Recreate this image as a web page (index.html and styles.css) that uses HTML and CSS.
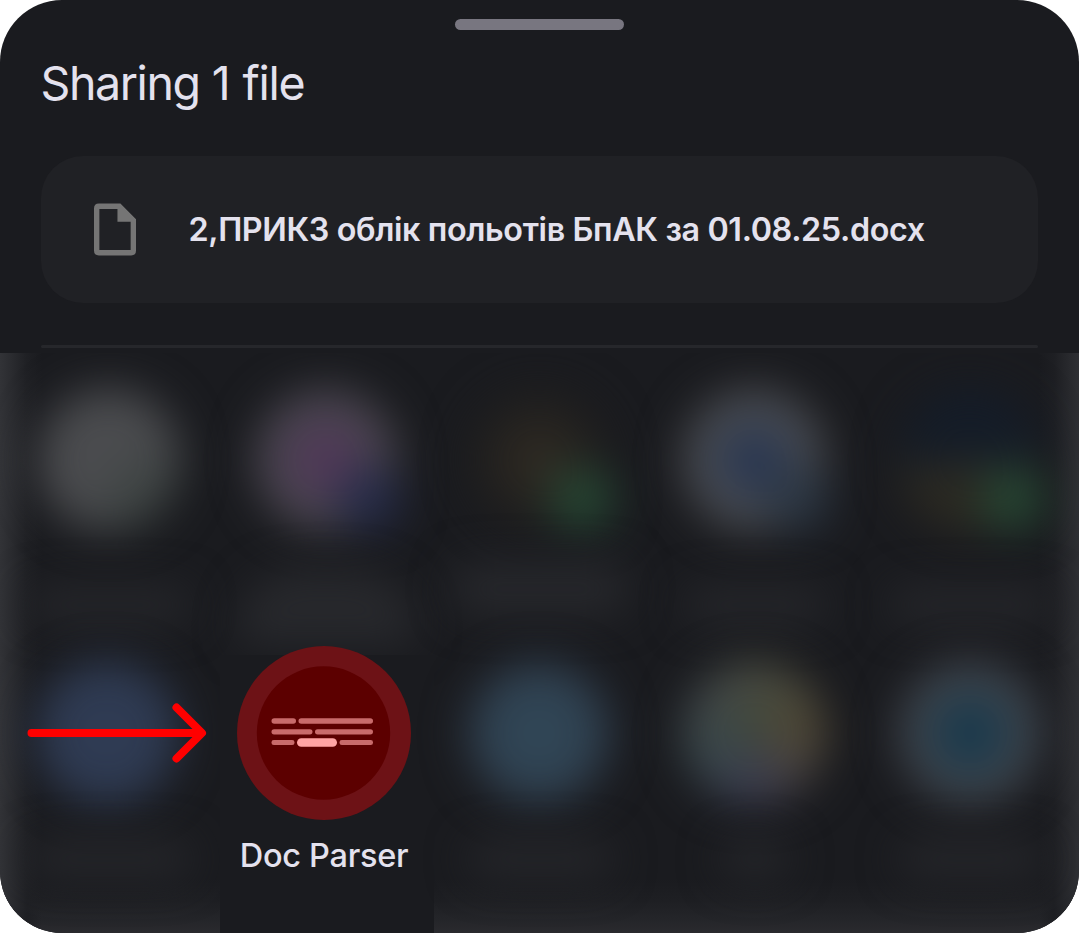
FILE: index.html
```html
<!DOCTYPE html>
<html lang="uk">
<head>
<meta charset="utf-8">
<title>Sharing 1 file</title>
<link rel="stylesheet" href="styles.css">
</head>
<body>
<main class="sheet">
  <div class="handle"></div>
  <h1 class="title"><span class="t-word">Sharing</span><span class="t-num">1</span><span class="t-file">file</span></h1>
  <section class="file-card">
    <svg class="file-icon" width="43" height="54" viewBox="0 0 44 54">
      <path fill="#757575" fill-rule="evenodd" d="M5 0H27L43 16V48Q43 53 38 53H5Q0 53 0 48V5Q0 0 5 0ZM5.500 5.500V47.500H37.500V18.500H24V5.500Z"/>
    </svg>
    <span class="file-name">2,ПРИКЗ облік польотів БпАК за 01.08.25.docx</span>
  </section>
  <div class="divider"></div>
  <section class="targets">
    <div class="app"><div class="icon gray"></div><div class="label w150"></div></div>
    <div class="app"><div class="icon violet"><i class="badge indigo"></i></div><div class="label tall"></div></div>
    <div class="app"><div class="icon dim"><i class="badge green"></i></div><div class="label high"></div></div>
    <div class="app"><div class="icon navy"><i class="badge slate"></i></div><div class="label w130"></div></div>
    <div class="app"><div class="icon split"><i class="badge green"></i></div><div class="label w150"></div></div>
    <div class="app"><div class="icon blue"></div><div class="label w150"></div></div>
    <div class="app selected">
      <svg class="doc-icon" width="174" height="174" viewBox="0 0 174 174">
        <circle cx="87" cy="87" r="87" fill="#6d1216"/>
        <circle cx="86.500" cy="87" r="66.700" fill="#5c0000"/>
        <g fill="#c96b6b">
          <rect x="34.500" y="72.200" width="24.500" height="5.600" rx="2.800"/>
          <rect x="61.500" y="72.200" width="74.500" height="5.600" rx="2.800"/>
          <rect x="34.500" y="83.200" width="41" height="5.200" rx="2.600"/>
          <rect x="78" y="83.200" width="58" height="5.200" rx="2.600"/>
          <rect x="34.500" y="94" width="23" height="5" rx="2.300"/>
          <rect x="102.500" y="94" width="33.500" height="5" rx="2.300"/>
        </g>
        <rect x="60" y="92.200" width="40" height="8.600" rx="4.300" fill="#ffa4a4"/>
      </svg>
      <span class="app-name">Doc Parser</span>
    </div>
    <div class="app"><div class="icon teal"></div><div class="label w130"></div></div>
    <div class="app"><div class="icon multi"></div><div class="label w60"></div></div>
    <div class="app"><div class="icon cyan"></div><div class="label w130"></div></div>
  </section>
  <svg class="arrow" width="180" height="62" viewBox="0 0 180 62">
    <path d="M4.500 31H174.500M149.500 5.500L175 31L149.500 56.500" fill="none" stroke="#ff0000" stroke-width="8" stroke-linecap="round" stroke-linejoin="round"/>
  </svg>
</main>
</body>
</html>
```
FILE: styles.css
```css
* { box-sizing: border-box; }
body { margin: 0; background: #fff; font-family: Inter, "Open Sans", sans-serif; }

.sheet {
  position: relative;
  display: flex;
  flex-direction: column;
  width: 1079px;
  height: 933px;
  overflow: hidden;
  border-radius: 62px;
  background: #1a1b1f;
  color: #e4e2ee;
}
.handle {
  flex: none;
  align-self: center;
  width: 169px;
  height: 11px;
  margin-top: 19px;
  border-radius: 5.5px;
  background: #787680;
}
.title {
  display: flex;
  gap: 12px;
  height: 60px;
  margin: 23px 0 0 40.5px;
  font-size: 46.5px;
  font-weight: 400;
  line-height: 60px;
  white-space: nowrap;
}
.t-word { letter-spacing: -1.4px; }
.t-file { letter-spacing: -1.3px; }

.file-card {
  display: flex;
  align-items: center;
  gap: 52px;
  height: 147px;
  margin: 43px 41px 0;
  padding-left: 52.5px;
  border-radius: 42px;
  background: #202125;
}
.file-icon { flex: none; }
.file-name {
  font-size: 32.3px;
  font-weight: 600;
  line-height: 40px;
  letter-spacing: -0.38px;
  white-space: nowrap;
}
.divider {
  height: 3px;
  margin: 42px 41px 5px;
  border-radius: 2px;
  background: #26272b;
}

/* Share targets */
.targets {
  position: relative;
  display: grid;
  grid-template-columns: 220px 214px 213px 216px 216px;
  grid-template-rows: 302px 278px;
  height: 580px;
  overflow: hidden;
}
.targets::before {
  content: "";
  position: absolute;
  inset: 0;
  background:
    linear-gradient(90deg, #323337, #2a2b2f 12px, #1f2024 27px, #1a1b1f00 42px),
    linear-gradient(270deg, #2e2f33, #28292d 10px, #1e1f23 25px, #1a1b1f00 40px),
    linear-gradient(0deg, #2a2a2e, #242529 14px, #1e1f23 32px, #1a1b1f00 54px);
}
.app {
  display: flex;
  flex-direction: column;
  align-items: center;
  padding-top: 35px;
}
.app:nth-child(n+6) { padding-top: 6px; }
.icon {
  position: relative;
  flex: none;
  width: 144px;
  height: 144px;
  margin-left: -3px;
  border-radius: 50%;
  filter: blur(22px);
}
.badge {
  position: absolute;
  right: -3px;
  bottom: 1px;
  width: 64px;
  height: 64px;
  border-radius: 50%;
}
.gray { background: radial-gradient(circle at 78% 80%, #3f4544 0 15%, #4b4c4f 40%); }
.violet { background: radial-gradient(circle, #523658 0 15%, #4a4352 45%, #49484d 68%); }
.dim { background: radial-gradient(circle, #2e2922 0 20%, #1d1d1e 65%); }
.navy { background: radial-gradient(circle, #253350 0 18%, #454b55 42%, #4c4c4e 66%); }
.split { background: linear-gradient(#141c28 0 45%, #2c2a22 60%); }
.blue { margin-left: -7px; background: #2f3b53; }
.teal { background: radial-gradient(circle, #304555 45%, #303a49 72%); }
.multi { background: radial-gradient(circle at 47% 47%, #3a473799 0 14%, transparent 35%), conic-gradient(#484b41, #524935 25%, #4a4440 35%, #3b3c52 50%, #3a494d 68%, #42484a 85%, #484b41); }
.cyan { background: radial-gradient(circle, #14364a 0 20%, #364550 42%, #45464c 68%); }
.indigo { background: #262c4a; }
.green { background: #264733; }
.slate { background: #2d3845; }

.label {
  flex: none;
  height: 38px;
  margin-top: 54px;
  border-radius: 19px;
  background: #25262a;
  filter: blur(20px);
}
.app:nth-child(n+6) .label { margin-top: 35px; }
.w60 { width: 70px; }
.w130 { width: 145px; }
.w150 { width: 164px; }
.label.tall {
  width: 180px;
  height: 76px;
  margin-top: 38px;
  border-radius: 90px 90px 20px 20px;
  background: #27282c;
}
.label.high { width: 175px; height: 54px; margin-top: 30px; background: #26272b; }

.app.selected {
  position: relative;
  padding: 0;
  background: #1a1b1f;
}
.doc-icon { flex: none; margin: -9px 7px 0 0; }
.app-name {
  margin: 16px 6px 0 0;
  font-size: 32.5px;
  font-weight: 500;
  line-height: 40px;
  letter-spacing: -0.3px;
  white-space: nowrap;
}
.arrow { position: absolute; left: 27px; top: 702px; }
```
